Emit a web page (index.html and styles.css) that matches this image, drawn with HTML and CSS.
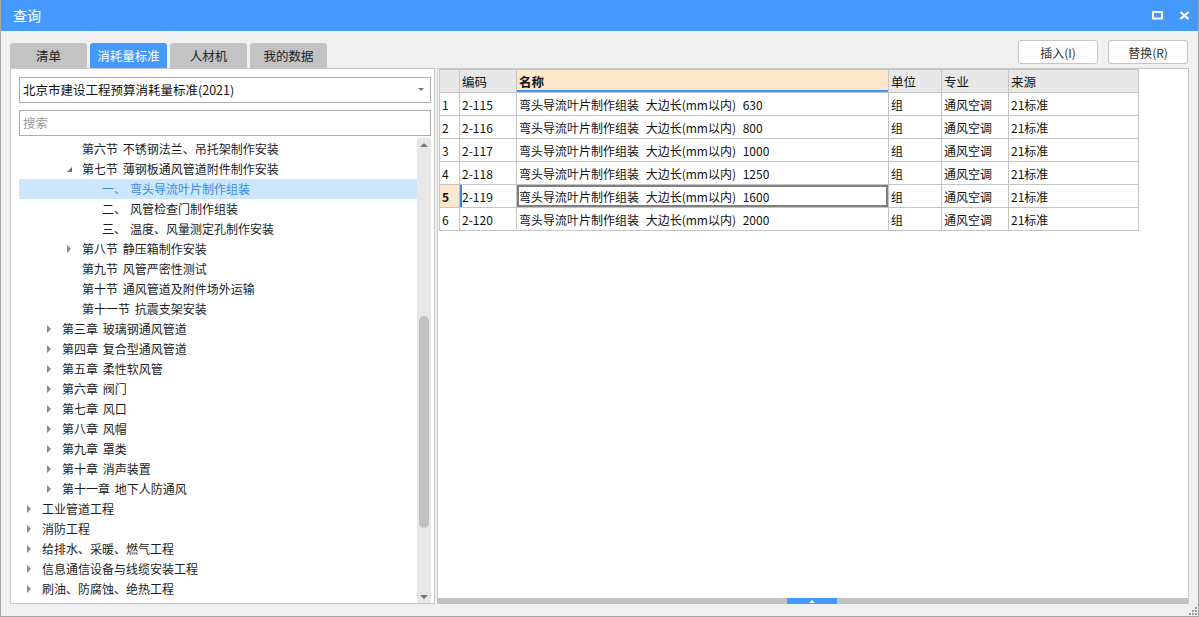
FILE: index.html
```html
<!DOCTYPE html>
<html lang="zh-CN">
<head>
<meta charset="utf-8">
<title>查询</title>
<link rel="stylesheet" href="styles.css">
</head>
<body>
<div class="window">
  <div class="titlebar">
    <span class="title">查询</span>
    <div class="winbtns">
      <svg class="wb" width="11" height="9" viewBox="0 0 11 9"><rect x="1" y="1" width="9" height="6.5" fill="none" stroke="#fff" stroke-width="2"/></svg>
      <svg class="wb" width="11" height="9" viewBox="0 0 11 9"><path d="M1.5 1 L9.5 8 M9.5 1 L1.5 8" stroke="#fff" stroke-width="2.2" fill="none"/></svg>
    </div>
  </div>
  <div class="body">
    <div class="toprow">
      <div class="tabs">
        <div class="tab"><span class="tabtext">清单</span></div>
        <div class="tab active"><span class="tabtext">消耗量标准</span></div>
        <div class="tab"><span class="tabtext">人材机</span></div>
        <div class="tab"><span class="tabtext">我的数据</span></div>
      </div>
      <div class="actions">
        <button class="btn">插入(I)</button>
        <button class="btn">替换(R)</button>
      </div>
    </div>
    <div class="main">
      <div class="leftpanel">
        <div class="combo">北京市建设工程预算消耗量标准(2021)<span class="caret"></span></div>
        <div class="search">搜索</div>
        <div class="treewrap">
          <div class="tree">
            <div class="row l2"><span class="tg"></span>第六节 不锈钢法兰、吊托架制作安装</div>
            <div class="row l2"><span class="tg open"></span>第七节 薄钢板通风管道附件制作安装</div>
            <div class="row l3 sel"><span class="tg"></span><span class="num">一、</span>弯头导流叶片制作组装</div>
            <div class="row l3"><span class="tg"></span><span class="num">二、</span>风管检查门制作组装</div>
            <div class="row l3"><span class="tg"></span><span class="num">三、</span>温度、风量测定孔制作安装</div>
            <div class="row l2"><span class="tg closed"></span>第八节 静压箱制作安装</div>
            <div class="row l2"><span class="tg"></span>第九节 风管严密性测试</div>
            <div class="row l2"><span class="tg"></span>第十节 通风管道及附件场外运输</div>
            <div class="row l2"><span class="tg"></span>第十一节 抗震支架安装</div>
            <div class="row l1"><span class="tg closed"></span>第三章 玻璃钢通风管道</div>
            <div class="row l1"><span class="tg closed"></span>第四章 复合型通风管道</div>
            <div class="row l1"><span class="tg closed"></span>第五章 柔性软风管</div>
            <div class="row l1"><span class="tg closed"></span>第六章 阀门</div>
            <div class="row l1"><span class="tg closed"></span>第七章 风口</div>
            <div class="row l1"><span class="tg closed"></span>第八章 风帽</div>
            <div class="row l1"><span class="tg closed"></span>第九章 罩类</div>
            <div class="row l1"><span class="tg closed"></span>第十章 消声装置</div>
            <div class="row l1"><span class="tg closed"></span>第十一章 地下人防通风</div>
            <div class="row l0"><span class="tg closed"></span>工业管道工程</div>
            <div class="row l0"><span class="tg closed"></span>消防工程</div>
            <div class="row l0"><span class="tg closed"></span>给排水、采暖、燃气工程</div>
            <div class="row l0"><span class="tg closed"></span>信息通信设备与线缆安装工程</div>
            <div class="row l0"><span class="tg closed"></span>刷油、防腐蚀、绝热工程</div>
          </div>
          <div class="vscroll">
            <span class="arr up"></span>
            <div class="track"><div class="vthumb"></div></div>
            <span class="arr down"></span>
          </div>
        </div>
      </div>
      <div class="rightpanel">
        <div class="tablearea">
          <table class="grid">
            <colgroup>
              <col class="c0"><col class="c1"><col class="c2"><col class="c3"><col class="c4"><col class="c5">
            </colgroup>
            <thead>
              <tr><th></th><th>编码</th><th class="sortcol">名称</th><th>单位</th><th>专业</th><th>来源</th></tr>
            </thead>
            <tbody>
              <tr><td class="rn">1</td><td>2-115</td><td>弯头导流叶片制作组装 大边长(mm以内) 630</td><td>组</td><td>通风空调</td><td>21标准</td></tr>
              <tr><td class="rn">2</td><td>2-116</td><td>弯头导流叶片制作组装 大边长(mm以内) 800</td><td>组</td><td>通风空调</td><td>21标准</td></tr>
              <tr><td class="rn">3</td><td>2-117</td><td>弯头导流叶片制作组装 大边长(mm以内) 1000</td><td>组</td><td>通风空调</td><td>21标准</td></tr>
              <tr><td class="rn">4</td><td>2-118</td><td>弯头导流叶片制作组装 大边长(mm以内) 1250</td><td>组</td><td>通风空调</td><td>21标准</td></tr>
              <tr class="cur"><td class="rn">5</td><td class="first">2-119</td><td class="focus">弯头导流叶片制作组装 大边长(mm以内) 1600</td><td>组</td><td>通风空调</td><td>21标准</td></tr>
              <tr><td class="rn">6</td><td>2-120</td><td>弯头导流叶片制作组装 大边长(mm以内) 2000</td><td>组</td><td>通风空调</td><td>21标准</td></tr>
            </tbody>
          </table>
        </div>
        <div class="hscroll"><div class="hthumb"><span class="uparr"></span></div></div>
      </div>
    </div>
    <div class="grip">
      <span class="dot d1"></span><span class="dot d2"></span><span class="dot d3"></span>
      <span class="dot d4"></span><span class="dot d5"></span><span class="dot d6"></span>
    </div>
  </div>
</div>
</body>
</html>
```
FILE: styles.css
```css
* { box-sizing: border-box; }
html, body { margin: 0; padding: 0; }
body {
  width: 1199px;
  height: 617px;
  overflow: hidden;
  font-family: "Noto Sans CJK SC", "Microsoft YaHei", sans-serif;
  font-size: 12px;
  color: #1c1c1c;
  background: #f0f0f0;
}
.window {
  width: 1199px;
  height: 617px;
  border: 1px solid #a6a6a6;
  border-top: none;
  display: flex;
  flex-direction: column;
  background: #f0f0f0;
}
.titlebar {
  height: 31px;
  flex: none;
  background: #4599fd;
  display: flex;
  align-items: center;
  justify-content: space-between;
  padding: 0 8px 0 12px;
  color: #fff;
}
.title { font-size: 14px; line-height: 31px; }
.winbtns { display: flex; align-items: center; gap: 16px; }
.wb { display: block; }

.body {
  flex: 1;
  position: relative;
  display: flex;
  flex-direction: column;
  padding: 0 9px 12px 9px;
}
.toprow {
  height: 37px;
  flex: none;
  display: flex;
  justify-content: space-between;
  align-items: flex-start;
}
.tabs { display: flex; gap: 3px; margin-top: 12px; }
.tab {
  width: 77px;
  height: 25px;
  display: flex;
  align-items: center;
  justify-content: center;
  font-size: 12.5px;
  color: #222;
  background: #c3c3c3;
  border-radius: 3px 3px 0 0;
}
.tabtext { line-height: 18px; white-space: nowrap; font-family: "Noto Sans CJK SC", sans-serif; }
.tab.active { background: #4599fd; color: #fff; }
.actions { display: flex; gap: 10px; margin-top: 9px; margin-right: 1px; }
.btn {
  width: 80px;
  height: 24px;
  font-family: "Noto Sans CJK SC", sans-serif;
  font-size: 12px;
  color: #333;
  background: #fdfdfd;
  border: 1px solid #c6c6c6;
  border-radius: 3px;
  padding: 0;
}

.main { flex: 1; display: flex; gap: 2px; min-height: 0; }
.leftpanel {
  width: 425px;
  flex: none;
  background: #fff;
  border: 1px solid #c8c8c8;
  padding: 8px 3px 0 8px;
  display: flex;
  flex-direction: column;
}
.combo {
  height: 26px;
  flex: none;
  border: 1px solid #acacac;
  padding-left: 3px;
  line-height: 24px;
  font-size: 12.5px;
  color: #111;
  position: relative;
}
.caret {
  position: absolute;
  right: 6px;
  top: 10px;
  width: 0;
  height: 0;
  border-left: 3px solid transparent;
  border-right: 3px solid transparent;
  border-top: 3px solid #777;
}
.search {
  margin-top: 7px;
  height: 26px;
  flex: none;
  border: 1px solid #acacac;
  padding-left: 3px;
  line-height: 24px;
  color: #9c9c9c;
  font-size: 12.5px;
}
.treewrap { margin-top: 2px; flex: 1; display: flex; min-height: 0; }
.tree { flex: 1; padding-top: 1px; overflow: hidden; }
.row {
  height: 20px;
  line-height: 20px;
  display: flex;
  align-items: center;
  white-space: nowrap;
  word-spacing: 2px;
}
.row.l0 { padding-left: 0; }
.row.l1 { padding-left: 20px; }
.row.l2 { padding-left: 40px; }
.row.l3 { padding-left: 60px; }
.row.sel { background: #cce6fc; color: #3a8be6; }
.tg { width: 23px; height: 20px; flex: none; position: relative; }
.tg.closed::after {
  content: "";
  position: absolute;
  left: 8px;
  top: 6px;
  border-top: 4px solid transparent;
  border-bottom: 4px solid transparent;
  border-left: 4px solid #8a8a8a;
}
.tg.open::after {
  content: "";
  position: absolute;
  left: 8px;
  top: 8px;
  border-left: 5px solid transparent;
  border-bottom: 5px solid #6b6b6b;
}
.num { margin-right: 4px; }

.vscroll {
  width: 14px;
  flex: none;
  background: #e8e8e8;
  display: flex;
  flex-direction: column;
  align-items: center;
}
.arr { width: 0; height: 0; flex: none; }
.arr.up {
  margin-top: 5px;
  border-left: 4px solid transparent;
  border-right: 4px solid transparent;
  border-bottom: 4px solid #777;
}
.arr.down {
  margin-bottom: 4px;
  border-left: 4px solid transparent;
  border-right: 4px solid transparent;
  border-top: 4px solid #6f6f6f;
}
.track { flex: 1; width: 100%; display: flex; justify-content: center; }
.vthumb {
  margin-top: 169px;
  width: 10px;
  height: 212px;
  background: #c1c1c1;
  border-radius: 5px;
}

.rightpanel {
  flex: 1;
  background: #fff;
  border: 1px solid #c8c8c8;
  border-bottom: none;
  display: flex;
  flex-direction: column;
}
.tablearea { flex: 1; padding-left: 1px; }
.grid {
  border-collapse: collapse;
  table-layout: fixed;
  width: 699px;
  font-size: 12px;
}
.c0 { width: 20px; }
.c1 { width: 57px; }
.c2 { width: 372px; }
.c3 { width: 53px; }
.c4 { width: 67px; }
.c5 { width: 130px; }
.grid th, .grid td {
  height: 23px;
  border: 1px solid #c4c4c4;
  padding: 0 0 0 2px;
  text-align: left;
  white-space: nowrap;
  overflow: hidden;
  color: #111;
  word-spacing: 4px;
}
.grid th { background: #e8e8e8; font-weight: normal; font-size: 12.5px; }
.grid th.sortcol {
  background: #fde8cc;
  font-weight: bold;
  box-shadow: inset 0 -2px 0 #3f94f0;
}
.grid td.rn { padding-left: 2px; }
.grid tr.cur td.rn { background: #fde8cc; font-weight: bold; }
.grid tr.cur td.first { box-shadow: inset 2px 0 0 #2f86ee; }
.grid td.focus { box-shadow: inset 0 0 0 2px #7f7f7f; }

.hscroll {
  height: 6px;
  flex: none;
  background: #c2c2c2;
  position: relative;
  margin: 0 -1px;
}
.hthumb {
  position: absolute;
  left: 350px;
  top: 0;
  width: 50px;
  height: 6px;
  background: #4599fd;
  display: flex;
  justify-content: center;
  align-items: center;
}
.uparr {
  width: 0;
  height: 0;
  border-left: 3px solid transparent;
  border-right: 3px solid transparent;
  border-bottom: 3px solid #fff;
}

.grip {
  position: absolute;
  right: 1px;
  bottom: 0;
  width: 9px;
  height: 9px;
}
.dot { position: absolute; width: 2px; height: 2px; background: #9a9a9a; }
.d1 { right: 0; top: 0; }
.d2 { right: 3px; top: 3px; }
.d3 { right: 0; top: 3px; }
.d4 { right: 6px; top: 6px; }
.d5 { right: 3px; top: 6px; }
.d6 { right: 0; top: 6px; }
```
